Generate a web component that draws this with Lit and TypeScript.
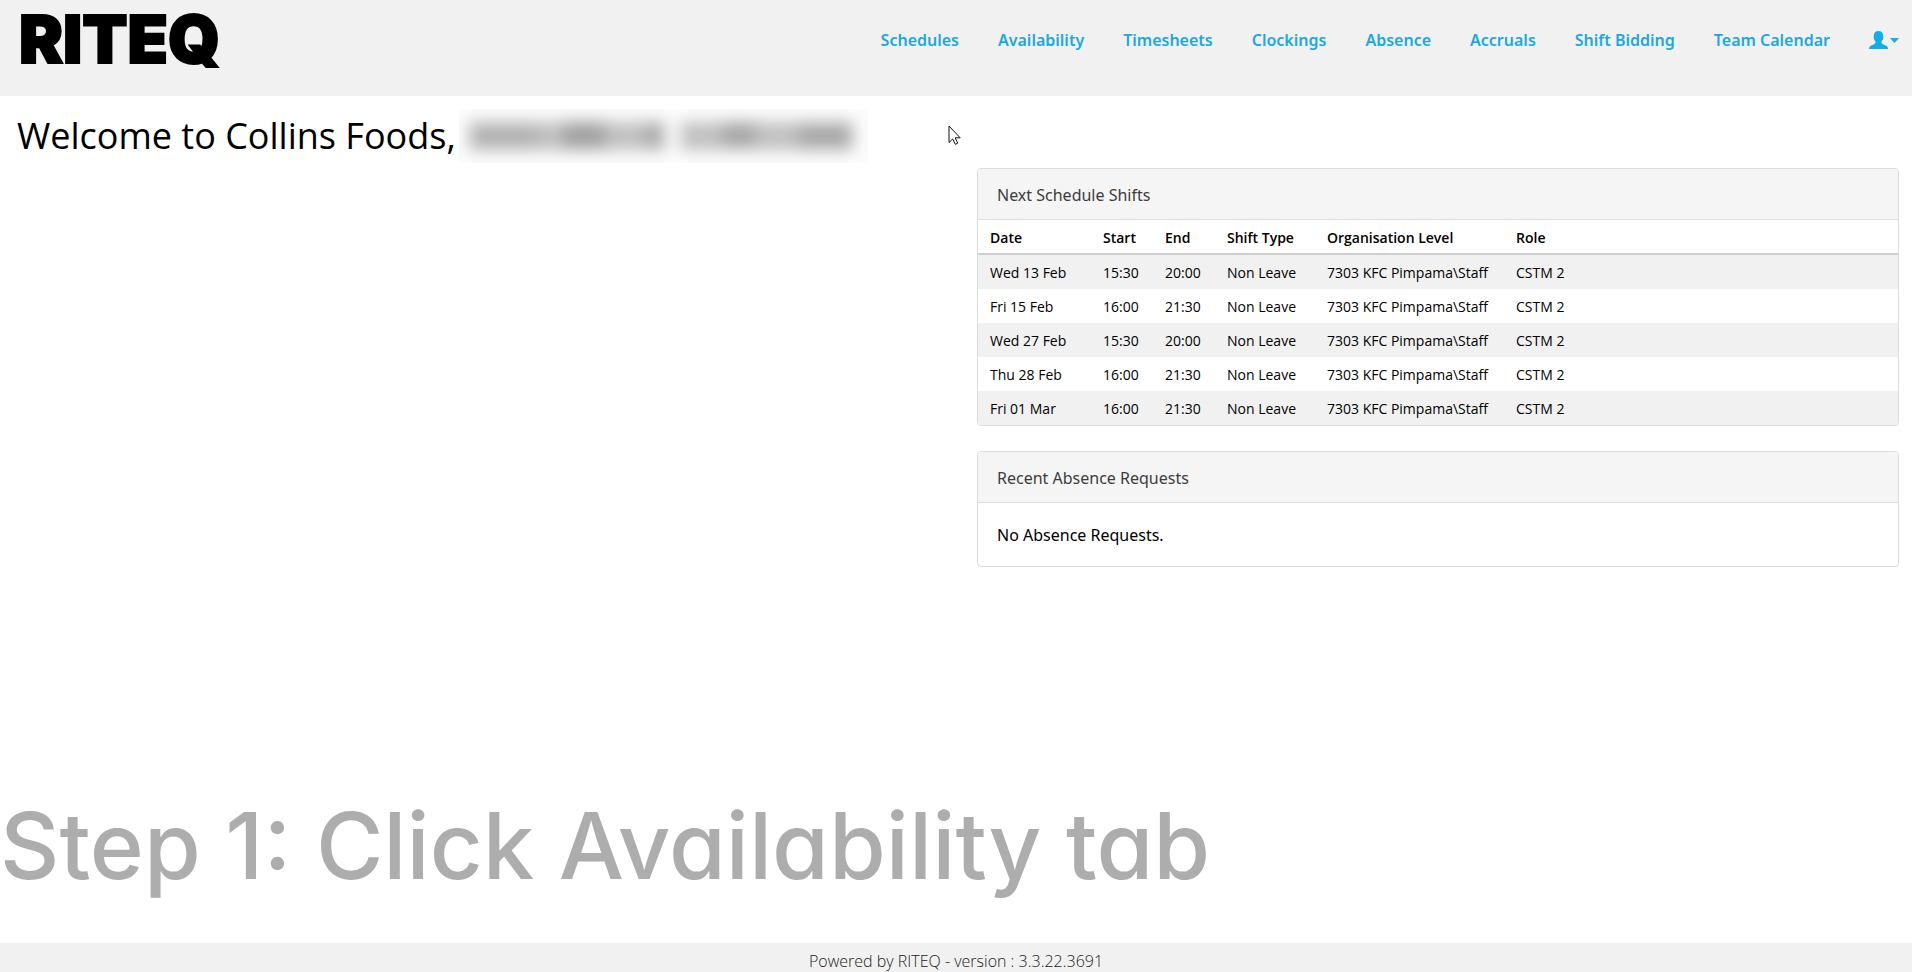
import { LitElement, html, css, svg } from "lit";
import { customElement } from "lit/decorators.js";

const NAV = [
  "Schedules",
  "Availability",
  "Timesheets",
  "Clockings",
  "Absence",
  "Accruals",
  "Shift Bidding",
  "Team Calendar",
];

const COLUMNS = ["Date", "Start", "End", "Shift Type", "Organisation Level", "Role"];

const SHIFTS = [
  ["Wed 13 Feb", "15:30", "20:00"],
  ["Fri 15 Feb", "16:00", "21:30"],
  ["Wed 27 Feb", "15:30", "20:00"],
  ["Thu 28 Feb", "16:00", "21:30"],
  ["Fri 01 Mar", "16:00", "21:30"],
].map((times) => [...times, "Non Leave", "7303 KFC Pimpama\\Staff", "CSTM 2"]);

// Grey smudges of the redacted name: left, top, width, height, opacity
const SMUDGES = [
  [10, 13, 196, 28, 0.24],
  [222, 13, 172, 28, 0.24],
  [14, 16, 66, 22, 0.08],
  [104, 12, 42, 28, 0.16],
  [186, 14, 18, 24, 0.12],
  [264, 13, 32, 24, 0.14],
  [340, 15, 52, 24, 0.13],
];

@customElement("site-header")
export class SiteHeader extends LitElement {
  static styles = css`
    :host {
      display: block;
      background: #f1f1f1;
    }
    .bar {
      display: flex;
      justify-content: space-between;
      align-items: flex-start;
      min-height: 96px;
      padding: 0 13px 0 20px;
      box-sizing: border-box;
    }
    .logo {
      display: block;
    }
    .logo svg {
      display: block;
      overflow: visible;
    }
    .logo text {
      font: 900 66px Inter, sans-serif;
      fill: #000;
      stroke: #000;
      stroke-width: 2px;
    }
    .links {
      display: flex;
      align-items: center;
      gap: 39px;
      padding-top: 28px;
    }
    .link {
      color: #1ba9dd;
      font-size: 16px;
      font-weight: 600;
      line-height: 24px;
      text-decoration: none;
      white-space: nowrap;
    }
    .account {
      display: flex;
      align-items: center;
      gap: 2px;
      height: 24px;
      padding: 0;
      border: 0;
      background: none;
      color: #12aeea;
      cursor: pointer;
    }
    .account svg {
      display: block;
      fill: currentColor;
    }
  `;

  render() {
    return html`
      <header class="bar">
        <a class="logo" href="#" aria-label="RITEQ">
          <svg width="260" height="90" viewBox="0 0 260 90">
            <text x="-1" y="63">RITEQ</text>
          </svg>
        </a>
        <nav class="links">
          ${NAV.map((name) => html`<a class="link" href="#">${name}</a>`)}
          <button class="account" type="button" aria-label="Account">
            <svg width="19" height="19" viewBox="0 0 19 19">
              <path d="M9.500 0C6.500 0 4.800 1.800 4.800 4.500C4.800 5.700 4.700 6.100 4.700 6.700C5 8.800 6.200 9.900 6.500 10.800C6.700 12 6 12.700 5 13.200L1.800 14.700C0.600 15.300 0.200 16 0 18H19C18.800 16 18.400 15.300 17.200 14.700L14 13.200C13 12.700 12.300 12 12.500 10.800C12.800 9.900 14 8.800 14.300 6.700C14.300 6.100 14.200 5.700 14.200 4.500C14.200 1.800 12.500 0 9.500 0Z" />
            </svg>
            <svg width="9" height="6" viewBox="0 0 9 6"><path d="M0 1H9L4.500 6Z" /></svg>
          </button>
        </nav>
      </header>
    `;
  }
}

@customElement("info-panel")
export class InfoPanel extends LitElement {
  static properties = { heading: {} };
  declare heading: string;

  static styles = css`
    :host {
      display: block;
      border: 1px solid #dcdcdc;
      border-radius: 4px;
      overflow: hidden;
      background: #fff;
    }
    .title {
      margin: 0;
      padding: 14px 19px 11px;
      border-bottom: 1px solid #dcdcdc;
      background: #f5f5f5;
      color: #3c3c3c;
      font-size: 16px;
      font-weight: 400;
      line-height: 25px;
    }
  `;

  render() {
    return html`<h2 class="title">${this.heading}</h2><slot></slot>`;
  }
}

@customElement("app-root")
export class AppRoot extends LitElement {
  static styles = css`
    :host {
      position: relative;
      display: flex;
      flex-direction: column;
      min-height: 100vh;
      background: #fff;
      color: #000;
      font-family: "Noto Sans", "Open Sans", sans-serif;
    }
    .content {
      display: flex;
      flex-direction: column;
      padding: 13px 13px 0 17px;
    }
    .welcome {
      display: flex;
      align-items: center;
      gap: 3px;
      margin: 0;
      font-family: "Open Sans", sans-serif;
      font-size: 36px;
      font-weight: 400;
      line-height: 54px;
    }
    .redacted {
      display: block;
    }
    .columns {
      display: grid;
      grid-template-columns: 1fr 1fr;
      gap: 38px;
      padding-top: 5px;
    }
    .panels {
      grid-column: 2;
      display: flex;
      flex-direction: column;
      gap: 25px;
    }
    .shifts {
      width: 100%;
      table-layout: fixed;
      border-collapse: collapse;
      font-family: "Open Sans", sans-serif;
      font-size: 14px;
      line-height: 20px;
      text-align: left;
      white-space: nowrap;
    }
    .shifts th,
    .shifts td {
      padding: 8px 0 6px 12px;
    }
    .shifts th {
      border-bottom: 2px solid #cfcfcf;
      font-weight: 600;
      padding-bottom: 5px;
    }
    .shifts tbody tr:nth-child(odd) {
      background: #f1f1f1;
    }
    .date {
      width: 113px;
    }
    .time {
      width: 62px;
    }
    .type {
      width: 100px;
    }
    .level {
      width: 189px;
    }
    .note {
      margin: 0;
      padding: 20px 19px 19px;
      font-size: 16px;
      line-height: 24px;
    }
    .step {
      margin: auto 0 0;
      padding-bottom: 41px;
      color: #adadad;
      font-family: Inter, sans-serif;
      font-feature-settings: "cv11";
      font-size: 92px;
      font-weight: 500;
      line-height: 112px;
    }
    .footer {
      padding-top: 8px;
      background: #f1f1f1;
      color: #222;
      font-family: "Open Sans", sans-serif;
      font-size: 16px;
      font-weight: 300;
      line-height: 21px;
      text-align: center;
    }
    .pointer {
      position: absolute;
      left: 948px;
      top: 125px;
    }
  `;

  render() {
    return html`
      <site-header></site-header>
      <main class="content">
        <h1 class="welcome">
          Welcome to Collins Foods,
          <svg class="redacted" width="409" height="54" viewBox="0 0 409 54" aria-hidden="true">
            <filter id="soft" x="-20%" y="-100%" width="140%" height="300%">
              <feGaussianBlur stdDeviation="8" />
            </filter>
            <rect width="409" height="54" fill="#fcfcfc" />
            <g filter="url(#soft)">
              ${SMUDGES.map(
                ([x, y, w, h, o]) =>
                  svg`<rect x=${x} y=${y} width=${w} height=${h} opacity=${o} />`
              )}
            </g>
          </svg>
        </h1>
        <div class="columns">
          <div class="panels">
            <info-panel heading="Next Schedule Shifts">
              <table class="shifts">
                <colgroup>
                  <col class="date" />
                  <col class="time" />
                  <col class="time" />
                  <col class="type" />
                  <col class="level" />
                  <col />
                </colgroup>
                <thead>
                  <tr>${COLUMNS.map((name) => html`<th scope="col">${name}</th>`)}</tr>
                </thead>
                <tbody>
                  ${SHIFTS.map((row) => html`<tr>${row.map((cell) => html`<td>${cell}</td>`)}</tr>`)}
                </tbody>
              </table>
            </info-panel>
            <info-panel heading="Recent Absence Requests">
              <p class="note">No Absence Requests.</p>
            </info-panel>
          </div>
        </div>
      </main>
      <p class="step">Step 1: Click Availability tab</p>
      <footer class="footer">Powered by RITEQ - version : 3.3.22.3691</footer>
      <svg class="pointer" width="13" height="20" viewBox="0 0 13 20" aria-hidden="true">
        <path
          d="M1 1V17.500L4.700 14L7.300 19.300L9.700 18.200L7.200 12.800H12.200Z"
          fill="#fff"
          stroke="#111"
        />
      </svg>
    `;
  }
}
